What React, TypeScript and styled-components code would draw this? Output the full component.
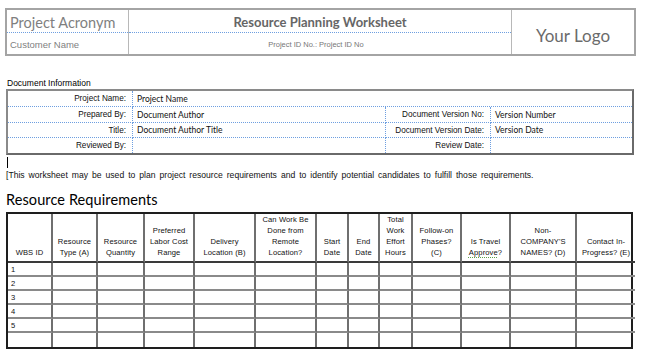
import styled, { createGlobalStyle } from 'styled-components';

const GlobalStyle = createGlobalStyle`
	html, body {
		margin: 0;
		padding: 0;
		background: #ffffff;
	}
	body {
		font-family: 'Liberation Sans', Arial, sans-serif;
		color: #000;
	}
`;

const columns = [
	{ w: 45, label: 'WBS ID' },
	{ w: 45, label: 'Resource\nType (A)' },
	{ w: 47, label: 'Resource\nQuantity' },
	{ w: 50, label: 'Preferred\nLabor Cost\nRange' },
	{ w: 61, label: 'Delivery\nLocation (B)' },
	{ w: 61, label: 'Can Work Be\nDone from\nRemote\nLocation?' },
	{ w: 32, label: 'Start\nDate' },
	{ w: 31, label: 'End\nDate' },
	{ w: 33, label: 'Total\nWork\nEffort\nHours' },
	{ w: 49, label: 'Follow-on\nPhases?\n(C)' },
	{ w: 49, label: 'Is Travel\nApprove?' },
	{ w: 66, label: "Non-\nCOMPANY'S\nNAMES? (D)" },
	{ w: 58, label: 'Contact In-\nProgress? (E)' },
];

const rows = ['1', '2', '3', '4', '5', ''];

const Page = styled.div`
	padding: 8px 0 0 5px;
	width: 643px;
`;

const TitleBox = styled.div`
	width: 631px;
	height: 48px;
	box-sizing: border-box;
	border: 2px solid #a4a4a4;
	display: grid;
	grid-template-columns: 122px 383px 1fr;
`;

const TitleCol = styled.div<{ divider?: boolean }>`
	display: grid;
	grid-template-rows: 23px 1fr;
	border-right: ${({ divider }) => (divider ? '1px solid #b8b8b8' : 'none')};
`;

const TitleCell = styled.div<{ top?: boolean; center?: boolean }>`
	display: flex;
	align-items: center;
	justify-content: ${({ center }) => (center ? 'center' : 'flex-start')};
	padding-left: ${({ center }) => (center ? '0' : '3px')};
	border-bottom: ${({ top }) => (top ? '1px dotted #6e9fe0' : 'none')};
`;

const Acronym = styled.span`
	font-family: Lato, sans-serif;
	font-size: 14.5px;
	color: #7f7f7f;
	padding-top: 2px;
`;

const Customer = styled.span`
	font-size: 9.5px;
	color: #7f7f7f;
	padding-top: 2px;
`;

const SheetTitle = styled.span`
	font-family: Lato, sans-serif;
	font-weight: 700;
	font-size: 13px;
	color: #666;
	padding-top: 2px;
`;

const ProjectId = styled.span`
	font-size: 7.5px;
	color: #777;
	padding-right: 8px;
	padding-top: 1px;
`;

const Logo = styled.div`
	display: flex;
	align-items: center;
	justify-content: center;
	font-family: Lato, sans-serif;
	font-size: 17px;
	color: #6b6b6b;
	padding-top: 6px;
`;

const SectionLabel = styled.div`
	margin: 21px 0 0 2px;
	font-size: 8.5px;
	line-height: 12px;
`;

const InfoTable = styled.div`
	margin: 0 0 0 1px;
	width: 628px;
	box-sizing: border-box;
	border: 2px solid #6a6a6a;
	border-top-color: #8a8a8a;
	border-left-color: #8a8a8a;
	display: grid;
	grid-template-columns: 125px 253px 105px 1fr;
	grid-template-rows: 16px 16px 15px 15px;
`;

const InfoCell = styled.div<{ label?: boolean; span?: number; last?: boolean; divider?: boolean }>`
	grid-column: ${({ span }) => (span ? `span ${span}` : 'auto')};
	display: flex;
	align-items: center;
	justify-content: ${({ label }) => (label ? 'flex-end' : 'flex-start')};
	padding: ${({ label }) => (label ? '0 6px 0 0' : '0 0 0 4px')};
	font-family: ${({ label }) => (label ? "'Liberation Sans', Arial, sans-serif" : 'Lato, sans-serif')};
	font-size: ${({ label }) => (label ? '8.2px' : '8.5px')};
	color: #111;
	border-bottom: ${({ last }) => (last ? 'none' : '1px dotted #6e9fe0')};
	border-right: ${({ divider }) => (divider ? '1px dotted #6e9fe0' : 'none')};
	white-space: nowrap;
`;

const Cursor = styled.div`
	margin: 2px 0 0 2px;
	width: 1px;
	height: 11px;
	background: #000;
`;

const Description = styled.p`
	margin: 2px 0 0 1px;
	font-size: 8.6px;
	line-height: 11px;
	word-spacing: 1.6px;
	color: #111;
`;

const Heading = styled.h2`
	margin: 10px 0 0 1px;
	font-family: Lato, sans-serif;
	font-weight: 400;
	font-size: 14.5px;
	line-height: 18px;
	letter-spacing: 0.1px;
	color: #000;
`;

const Sheet = styled.div`
	margin: 3px 0 0 1px;
	width: 627px;
	box-sizing: border-box;
	border: 2px solid #1e1e1e;
	display: grid;
	grid-template-columns: ${columns.map((c) => `${c.w}px`).join(' ')};
	grid-template-rows: 49px repeat(6, 14px);
`;

const HeadCell = styled.div<{ last?: boolean }>`
	display: flex;
	align-items: flex-end;
	justify-content: center;
	text-align: center;
	white-space: pre-line;
	padding: 0 1px 3px;
	font-size: 7.6px;
	line-height: 11px;
	letter-spacing: 0.1px;
	color: #111;
	border-right: ${({ last }) => (last ? 'none' : '2px solid #6f6f6f')};
	border-bottom: 2px solid #3a3a3a;
	box-sizing: border-box;
`;

const Underlined = styled.span`
	text-decoration: underline dotted #5fa04a;
	text-decoration-thickness: 1px;
	text-underline-offset: 2px;
`;

const BodyCell = styled.div<{ last?: boolean; bottom?: boolean }>`
	display: flex;
	align-items: center;
	padding-left: 3px;
	font-size: 7.6px;
	color: #111;
	border-right: ${({ last }) => (last ? 'none' : '2px solid #6f6f6f')};
	border-bottom: ${({ bottom }) => (bottom ? 'none' : '2px solid #8a8a8a')};
	box-sizing: border-box;
`;

const App = () => {
	return (
		<>
			<GlobalStyle />
			<Page>
				<TitleBox>
					<TitleCol divider>
						<TitleCell top>
							<Acronym>Project Acronym</Acronym>
						</TitleCell>
						<TitleCell>
							<Customer>Customer Name</Customer>
						</TitleCell>
					</TitleCol>
					<TitleCol divider>
						<TitleCell top center>
							<SheetTitle>Resource Planning Worksheet</SheetTitle>
						</TitleCell>
						<TitleCell center>
							<ProjectId>Project ID No.: Project ID No</ProjectId>
						</TitleCell>
					</TitleCol>
					<Logo>Your Logo</Logo>
				</TitleBox>

				<SectionLabel>Document Information</SectionLabel>
				<InfoTable>
					<InfoCell label divider>Project Name:</InfoCell>
					<InfoCell span={3}>Project Name</InfoCell>

					<InfoCell label divider>Prepared By:</InfoCell>
					<InfoCell divider>Document Author</InfoCell>
					<InfoCell label divider>Document Version No:</InfoCell>
					<InfoCell>Version Number</InfoCell>

					<InfoCell label divider>Title:</InfoCell>
					<InfoCell divider>Document Author Title</InfoCell>
					<InfoCell label divider>Document Version Date:</InfoCell>
					<InfoCell>Version Date</InfoCell>

					<InfoCell label divider last>Reviewed By:</InfoCell>
					<InfoCell divider last></InfoCell>
					<InfoCell label divider last>Review Date:</InfoCell>
					<InfoCell last></InfoCell>
				</InfoTable>

				<Cursor />
				<Description>
					[This worksheet may be used to plan project resource requirements and to identify potential candidates to fulfill those requirements.
				</Description>

				<Heading>Resource Requirements</Heading>
				<Sheet>
					{columns.map((c, i) => (
						<HeadCell key={c.label} last={i === columns.length - 1}>
							{c.label === 'Is Travel\nApprove?' ? (
								<span>
									{'Is Travel\n'}
									<Underlined>Approve</Underlined>?
								</span>
							) : (
								c.label
							)}
						</HeadCell>
					))}
					{rows.map((r, ri) =>
						columns.map((c, ci) => (
							<BodyCell
								key={`${ri}-${ci}`}
								last={ci === columns.length - 1}
								bottom={ri === rows.length - 1}
							>
								{ci === 0 ? r : ''}
							</BodyCell>
						))
					)}
				</Sheet>
			</Page>
		</>
	);
};

export default App;
